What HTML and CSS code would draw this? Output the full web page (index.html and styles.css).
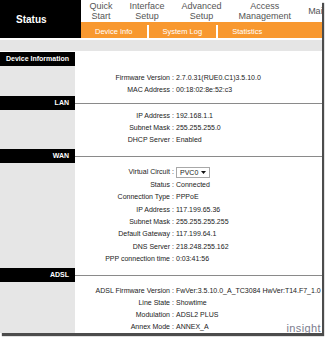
FILE: index.html
```html
<!DOCTYPE html>
<html>
<head>
<meta charset="utf-8">
<title>Status</title>
<link rel="stylesheet" href="styles.css">
</head>
<body>
<div class="page">
  <header class="top">
    <div class="brand">Status</div>
    <div class="nav">
      <ul class="menu">
        <li>Quick<br>Start</li>
        <li>Interface<br>Setup</li>
        <li>Advanced<br>Setup</li>
        <li>Access<br>Management</li>
        <li>Maintenance</li>
      </ul>
      <div class="submenu">
        <span class="sub">Device Info</span>
        <span class="sep"></span>
        <span class="sub">System Log</span>
        <span class="sep"></span>
        <span class="sub">Statistics</span>
      </div>
    </div>
  </header>
  <div class="strip"></div>
  <main class="body">
    <section class="sec sec-dev">
      <div class="band"><div class="band-title">Device Information</div></div>
      <div class="rows">
        <div class="row"><span class="label">Firmware Version</span><span class="colon">:</span><span class="value">2.7.0.31(RUE0.C1)3.5.10.0</span></div>
        <div class="row"><span class="label">MAC Address</span><span class="colon">:</span><span class="value">00:18:02:8e:52:c3</span></div>
      </div>
    </section>
    <section class="sec sec-lan">
      <div class="band"><div class="band-title">LAN</div><div class="band-rule"></div></div>
      <div class="rows">
        <div class="row"><span class="label">IP Address</span><span class="colon">:</span><span class="value">192.168.1.1</span></div>
        <div class="row"><span class="label">Subnet Mask</span><span class="colon">:</span><span class="value">255.255.255.0</span></div>
        <div class="row"><span class="label">DHCP Server</span><span class="colon">:</span><span class="value">Enabled</span></div>
      </div>
    </section>
    <section class="sec sec-wan">
      <div class="band"><div class="band-title">WAN</div><div class="band-rule"></div></div>
      <div class="rows">
        <div class="row row-select"><span class="label">Virtual Circuit</span><span class="colon">:</span><span class="value"><span class="select">PVC0<svg width="5" height="3" viewBox="0 0 5 3"><path d="M0 0h5L2.5 3z" fill="#111"/></svg></span></span></div>
        <div class="row"><span class="label">Status</span><span class="colon">:</span><span class="value">Connected</span></div>
        <div class="row"><span class="label">Connection Type</span><span class="colon">:</span><span class="value">PPPoE</span></div>
        <div class="row"><span class="label">IP Address</span><span class="colon">:</span><span class="value">117.199.65.36</span></div>
        <div class="row"><span class="label">Subnet Mask</span><span class="colon">:</span><span class="value">255.255.255.255</span></div>
        <div class="row"><span class="label">Default Gateway</span><span class="colon">:</span><span class="value">117.199.64.1</span></div>
        <div class="row"><span class="label">DNS Server</span><span class="colon">:</span><span class="value">218.248.255.162</span></div>
        <div class="row"><span class="label">PPP connection time</span><span class="colon">:</span><span class="value">0:03:41:56</span></div>
      </div>
    </section>
    <section class="sec sec-adsl">
      <div class="band"><div class="band-title">ADSL</div><div class="band-rule"></div></div>
      <div class="rows">
        <div class="row"><span class="label">ADSL Firmware Version</span><span class="colon">:</span><span class="value">FwVer:3.5.10.0_A_TC3084 HwVer:T14.F7_1.0</span></div>
        <div class="row"><span class="label">Line State</span><span class="colon">:</span><span class="value">Showtime</span></div>
        <div class="row"><span class="label">Modulation</span><span class="colon">:</span><span class="value">ADSL2 PLUS</span></div>
        <div class="row"><span class="label">Annex Mode</span><span class="colon">:</span><span class="value">ANNEX_A</span></div>
      </div>
    </section>
  </main>
  <div class="mark">insight</div>
</div>
</body>
</html>
```
FILE: styles.css
```css
* { box-sizing: border-box; margin: 0; padding: 0; }
html, body { background: #fff; }
body {
  width: 327px;
  height: 339px;
  overflow: hidden;
  font-family: "Liberation Sans", Arial, sans-serif;
  color: #222;
}
.page {
  position: relative;
  width: 322px;
  height: 333px;
  background: #fff;
  box-shadow: 2px 3px 1px rgba(0, 0, 0, 0.7);
  overflow: hidden;
}

/* header */
.top { display: flex; height: 38px; }
.brand {
  width: 81px;
  flex: none;
  background: #000;
  color: #fff;
  font-weight: bold;
  font-size: 10px;
  display: flex;
  align-items: center;
  padding-left: 16px;
}
.nav { flex: 1; min-width: 0; display: flex; flex-direction: column; }
.menu {
  list-style: none;
  display: flex;
  align-items: center;
  height: 22px;
  font-size: 9px;
  line-height: 10px;
  color: #555;
  white-space: nowrap;
}
.menu li { padding: 0 8.5px; text-align: center; }
.submenu {
  display: flex;
  height: 16px;
  background: #f8982f;
  color: #fff;
  font-size: 7.5px;
  white-space: nowrap;
}
.sub { display: flex; align-items: center; padding: 2px 14px 0; }
.sep { width: 2px; margin-top: 3px; background: #fff; }

.strip { height: 11px; margin: 2px 0 1px; background: #e5e5e5; }

/* body */
.body {
  height: 281px;
  background: linear-gradient(to right, #e6e6e6 75px, #fff 75px);
}
.band { display: flex; height: 14px; }
.band-title {
  width: 75px;
  flex: none;
  background: #000;
  color: #fff;
  font-weight: bold;
  font-size: 7px;
  line-height: 13px;
  text-align: right;
  padding-right: 6px;
  white-space: nowrap;
}
.band-rule { flex: 1; height: 1px; margin-top: 7px; background: #8a8a8a; }

.row {
  display: grid;
  grid-template-columns: 75px 95px 6px 1fr;
  align-items: center;
  height: 12px;
  font-size: 7px;
  line-height: 12px;
  white-space: nowrap;
}
.label { grid-column: 2; text-align: right; }
.colon { text-align: center; }

.sec-dev .rows { padding-top: 6px; }
.sec-wan { margin-top: 3px; }
.sec-wan .rows { padding-top: 2px; }
.sec-wan .row { height: 12.3px; }
.sec-wan .row-select { height: 14px; }
.sec-adsl { margin-top: 3px; }
.sec-adsl .rows { padding-top: 3px; }

.select {
  display: inline-flex;
  align-items: center;
  width: 34px;
  height: 11px;
  padding-left: 3px;
  border: 1px solid #a8a8a8;
  background: #fff;
  line-height: 9px;
  vertical-align: middle;
}
.select svg { margin-left: auto; margin-right: 3px; }

.mark {
  position: absolute;
  right: 1px;
  bottom: -1px;
  font-size: 11px;
  letter-spacing: 0.4px;
  color: #7c7c8e;
}
```
